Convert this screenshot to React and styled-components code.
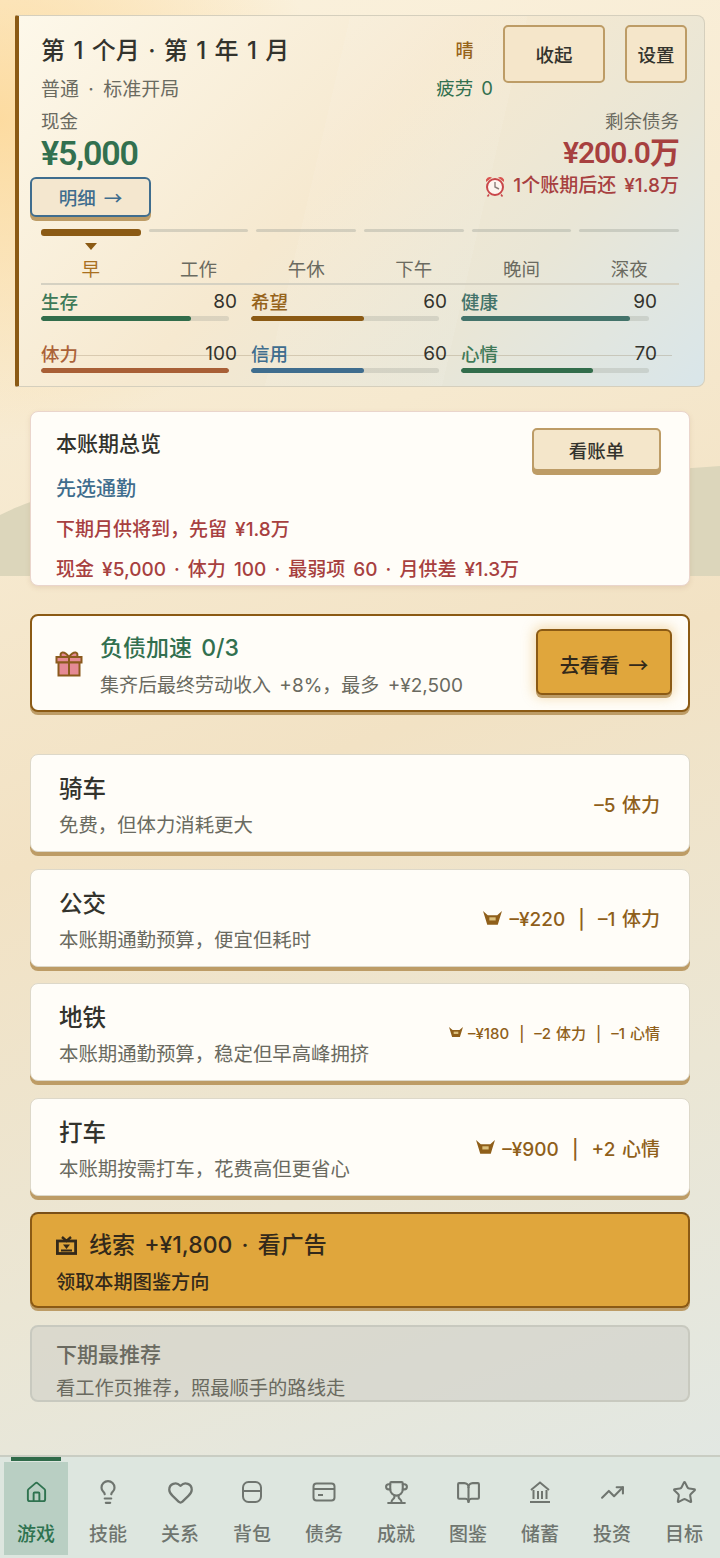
import React from 'react';
import styled, { createGlobalStyle } from 'styled-components';
import { House, Lightbulb, Heart, Trophy, BookOpen, TrendingUp, Star } from 'lucide-react';

const fontStack = '"Inter", "Noto Sans CJK SC", sans-serif';

const GlobalStyle = createGlobalStyle`
  * { box-sizing: border-box; }
  html, body { margin: 0; padding: 0; }
  body {
    font-family: ${fontStack};
    word-spacing: 3px;
    color: #2f2f2a;
  }
  button { font-family: ${fontStack}; word-spacing: 3px; }
`;

const Page = styled.div`
  position: relative;
  width: 720px;
  height: 1558px;
  overflow: hidden;
  display: flex;
  flex-direction: column;
  background:
    radial-gradient(circle at 0 120px, rgba(253, 214, 146, 0.8) 0, rgba(253, 214, 146, 0) 320px),
    linear-gradient(160deg, #fbf2de 0%, #f6e9cf 30%, #f2e2c4 48%, #ebe6d4 72%, #e0e8e6 100%);
`;

const Hill = styled.svg`
  position: absolute;
  left: 0;
  top: 460px;
  width: 720px;
  height: 116px;
`;

const Main = styled.main`
  position: relative;
  flex: 1;
  padding: 15px 30px 0;
  display: flex;
  flex-direction: column;
`;

const Panel = styled.section`
  margin: 0 -15px;
  height: 372px;
  padding: 9px 25px 0 22px;
  border: 1px solid #d5cfbd;
  border-left: 4px solid #8b5a14;
  border-radius: 2px 8px 8px 2px;
  background:
    linear-gradient(103deg, transparent 43%, rgba(255, 255, 255, 0.07) 43%, rgba(255, 255, 255, 0.07) 66%, transparent 66%),
    linear-gradient(135deg, #fdf8ea 0%, #f6e9d0 45%, #e9e6d6 72%, #d9e6ea 100%);
`;

const TopRow = styled.div`
  display: flex;
  align-items: flex-start;
  height: 81px;
`;

const TitleBlock = styled.div`
  flex: 1;
`;

const Title = styled.h1`
  margin: 0;
  font-size: 24px;
  line-height: 52px;
  font-weight: 500;
  word-spacing: 2px;
  color: #33332d;
  white-space: pre;
`;

const Sub = styled.div`
  font-size: 19px;
  line-height: 26px;
  word-spacing: 4px;
  color: #6a6a60;
`;

const StatusCol = styled.div`
  display: flex;
  flex-direction: column;
  align-items: center;
  margin-right: 10px;
`;

const Weather = styled.div`
  font-size: 18px;
  line-height: 52px;
  font-weight: 500;
  color: #96631a;
`;

const Fatigue = styled.div`
  font-size: 18.5px;
  line-height: 22px;
  color: #32704f;
`;

const TopButton = styled.button`
  width: ${p => p.$w}px;
  height: 58px;
  margin-left: ${p => p.$ml || 0}px;
  margin-right: ${p => p.$mr || 0}px;
  border: 2px solid #bd9c66;
  border-radius: 5px;
  background: #f5e6ca;
  font-size: 18.5px;
  font-weight: 500;
  color: #33332d;
`;

const MoneyRow = styled.div`
  display: flex;
  justify-content: space-between;
  align-items: flex-start;
`;

const MoneyLabel = styled.div`
  padding-top: 2px;
  font-size: 18.5px;
  line-height: 26px;
  color: #6a6a60;
`;

const Amount = styled.div`
  font-family: "Roboto", "Noto Sans CJK SC", sans-serif;
  font-size: ${p => p.$size}px;
  line-height: 38px;
  font-weight: 600;
  letter-spacing: ${p => p.$ls}px;
  color: ${p => p.$color};
`;

const DebtCol = styled.div`
  text-align: right;
`;

const DueRow = styled.div`
  display: flex;
  justify-content: flex-end;
  align-items: center;
  gap: 7px;
  font-size: 19px;
  line-height: 28px;
  font-weight: 500;
  color: #a7403f;
`;

const Arrow = styled.span`
  font-family: "Noto Sans CJK SC", sans-serif;
`;

const DetailButton = styled.button`
  display: block;
  width: 121px;
  height: 40px;
  margin: 5px 0 0 -11px;
  border: 2px solid #3f6d8e;
  border-radius: 6px;
  background: #f4e7cf;
  box-shadow: 0 4px 0 #bd9c66;
  font-size: 18.5px;
  font-weight: 500;
  color: #3f6d8e;
`;

const Phases = styled.div`
  display: grid;
  grid-template-columns: repeat(6, 1fr);
  column-gap: 8px;
  margin-top: 12px;
  border-bottom: 2px solid #d5d1c2;
`;

const Phase = styled.div`
  display: flex;
  flex-direction: column;
  align-items: center;
`;

const PhaseBar = styled.div`
  align-self: stretch;
  height: ${p => (p.$active ? 7 : 3)}px;
  margin-bottom: ${p => (p.$active ? 7 : 11)}px;
  border-radius: 3px;
  background: ${p => (p.$active ? '#8b5a14' : 'rgba(150, 155, 145, 0.35)')};
`;

const Marker = styled.div`
  width: 0;
  height: 0;
  border-left: 6px solid transparent;
  border-right: 6px solid transparent;
  border-top: 7px solid ${p => (p.$show ? '#8b5a14' : 'transparent')};
`;

const PhaseLabel = styled.div`
  margin-top: 6px;
  font-size: 18.5px;
  line-height: 26px;
  height: 27px;
  color: ${p => (p.$active ? '#a9701f' : '#6a6a60')};
`;

const Stats = styled.div`
  position: relative;
  display: grid;
  grid-template-columns: repeat(3, 196px);
  column-gap: 14px;
  margin-top: 3px;
`;

const Strike = styled.div`
  position: absolute;
  left: 0;
  width: 631px;
  top: 67px;
  height: 1px;
  background: rgba(140, 120, 85, 0.28);
`;

const Stat = styled.div`
  position: relative;
  height: 52px;
`;

const StatHead = styled.div`
  display: flex;
  justify-content: space-between;
  padding-top: 2px;
  font-size: 18.5px;
  line-height: 24px;
`;

const StatName = styled.span`
  color: ${p => p.$color};
  font-weight: 500;
`;

const StatValue = styled.span`
  font-size: 19px;
  color: #33332d;
`;

const Track = styled.div`
  width: 188px;
  height: 5px;
  margin-top: 2px;
  border-radius: 3px;
  overflow: hidden;
  background: rgba(150, 155, 145, 0.28);
`;

const Fill = styled.div`
  height: 100%;
  border-radius: 3px;
  background: ${p => p.$color};
`;

const Overview = styled.section`
  position: relative;
  height: 175px;
  margin-top: 24px;
  padding: 16px 28px 0 25px;
  overflow: hidden;
  background: #fffdf8;
  border: 1px solid #ead5cc;
  border-radius: 8px;
  box-shadow: 0 2px 5px rgba(160, 120, 90, 0.16);
`;

const OverviewTop = styled.div`
  display: flex;
  justify-content: space-between;
  align-items: flex-start;
  height: 46px;
`;

const OverviewTitle = styled.div`
  margin-top: 1px;
  font-size: 21px;
  line-height: 30px;
  font-weight: 500;
  color: #33332d;
`;

const BillButton = styled.button`
  width: 129px;
  height: 43px;
  border: 2px solid #bd9c66;
  border-radius: 5px;
  background: #f4e6ca;
  box-shadow: 0 4px 0 #bd9c66;
  font-size: 18.5px;
  font-weight: 500;
  color: #33332d;
`;

const OverviewLine = styled.div`
  margin-bottom: 10.5px;
  font-size: ${p => p.$size || 19}px;
  line-height: 30px;
  font-weight: 500;
  color: ${p => p.$color};
`;

const Boost = styled.section`
  display: flex;
  align-items: center;
  height: 98px;
  margin-top: 28px;
  padding: 0 16px 0 23px;
  background: #fffdf8;
  border: 2px solid #8b5a14;
  border-radius: 8px;
  box-shadow: 0 3px 0 #bd9c66;
`;

const BoostText = styled.div`
  flex: 1;
  margin: 8px 0 0 17px;
`;

const BoostTitle = styled.div`
  font-size: 23px;
  line-height: 30px;
  font-weight: 500;
  color: #32704f;
`;

const BoostSub = styled.div`
  margin-top: 8px;
  font-size: 19px;
  line-height: 30px;
  color: #6a6a60;
`;

const GoButton = styled.button`
  width: 136px;
  height: 66px;
  margin-top: -2px;
  padding-top: 6px;
  border: 2px solid #8b5a14;
  border-radius: 6px;
  background: #e0a63c;
  box-shadow: 0 3px 0 #bd9c66, 0 0 12px 3px rgba(224, 166, 60, 0.35);
  font-size: 20px;
  font-weight: 500;
  color: #33291a;
`;

const Options = styled.div`
  display: flex;
  flex-direction: column;
  gap: 16.7px;
  margin-top: 42px;
`;

const Option = styled.div`
  display: flex;
  justify-content: space-between;
  align-items: center;
  height: 98px;
  padding: 0 29px 0 28px;
  background: #fffdf8;
  border: 1px solid #ddd8c9;
  border-radius: 8px;
  box-shadow: 0 4px 0 #bd9c66;
`;

const OptionText = styled.div`
  margin-top: 8px;
`;

const OptionName = styled.div`
  font-size: 23.5px;
  line-height: 32px;
  font-weight: 500;
  color: #33332d;
`;

const OptionDesc = styled.div`
  margin-top: 4px;
  font-size: 19.4px;
  line-height: 32px;
  color: #6a6a60;
`;

const Cost = styled.div`
  display: flex;
  align-items: center;
  gap: ${p => (p.$small ? 5 : 7)}px;
  font-size: ${p => (p.$small ? 15 : 19)}px;
  font-weight: 500;
  word-spacing: ${p => (p.$small ? 1 : 1.5)}px;
  color: #8f5f1a;
  white-space: pre;
`;

const AdCard = styled.section`
  height: 96px;
  margin-top: 16px;
  padding: 15px 24px 0;
  background: #e0a63c;
  border: 2px solid #8b5a14;
  border-top-color: #7a5018;
  border-radius: 8px;
  box-shadow: 0 3px 0 #bd9c66;
`;

const AdTitle = styled.div`
  display: flex;
  align-items: center;
  gap: 12px;
  font-size: 23px;
  line-height: 32px;
  font-weight: 500;
  color: #33291a;
`;

const AdSub = styled.div`
  margin-top: 6px;
  font-size: 19.2px;
  line-height: 30px;
  font-weight: 500;
  color: #33291a;
`;

const NextCard = styled.section`
  height: 77px;
  margin-top: 17px;
  padding: 12px 24px 0;
  overflow: hidden;
  background: rgba(205, 205, 198, 0.55);
  border: 2px solid #c8c9bf;
  border-radius: 8px;
`;

const NextTitle = styled.div`
  font-size: 21px;
  line-height: 32px;
  font-weight: 500;
  color: #6a6a60;
`;

const NextSub = styled.div`
  margin-top: 2px;
  font-size: 19.3px;
  line-height: 30px;
  color: #6a6a60;
`;

const Nav = styled.nav`
  position: relative;
  display: grid;
  grid-template-columns: repeat(10, 72px);
  height: 103px;
  border-top: 2px solid #c9cdc3;
  background: #dde6df;
`;

const NavItem = styled.div`
  position: relative;
  display: flex;
  flex-direction: column;
  align-items: center;
  margin: 5px 4px 3px;
  padding-top: 17px;
  background: ${p => (p.$active ? '#b9cfc3' : 'transparent')};
  color: ${p => (p.$active ? '#2f7350' : '#6f756f')};
`;

const Indicator = styled.div`
  position: absolute;
  top: -5px;
  left: 7px;
  right: 7px;
  height: 4px;
  background: #2f6b4a;
`;

const NavIcon = styled.div`
  display: flex;
  align-items: center;
  justify-content: center;
  height: 26px;
`;

const NavLabel = styled.div`
  margin-top: 17px;
  font-size: 19px;
  line-height: 26px;
  font-weight: 500;
`;

const CrownIcon = ({ size }) => (
  <svg width={size} height={size * 0.72} viewBox="0 0 18 13">
    <path d="M0 0 L4.5 4 H13.5 L18 0 L15.5 8 L14 13 H4 L2.5 8 Z" fill="#8f5f1a" />
    <rect x="6" y="6" width="6" height="3" fill="#dcc07c" />
  </svg>
);

const TvIcon = () => (
  <svg width="21" height="19" viewBox="0 0 21 19">
    <path d="M6 1 L10.5 5 L15 1" fill="none" stroke="#33291a" strokeWidth="2.4" />
    <rect x="1.4" y="5" width="18.2" height="12.5" fill="none" stroke="#33291a" strokeWidth="2.8" />
    <path d="M7 8.5 H14 L10.5 13 Z" fill="#33291a" />
    <rect x="5" y="13.5" width="11" height="2" fill="#33291a" />
  </svg>
);

const AlarmIcon = () => (
  <svg width="22" height="22" viewBox="0 0 22 22">
    <path d="M2 7 A4 4 0 0 1 8 2.6 Z M20 7 A4 4 0 0 0 14 2.6 Z" fill="#d9534f" />
    <circle cx="11" cy="12" r="8" fill="#fdf5ee" stroke="#c9474a" strokeWidth="2" />
    <path d="M11 7 V12 L15 14" fill="none" stroke="#8a7f7a" strokeWidth="1.4" />
    <path d="M5 19.5 L3.5 21.5 M17 19.5 L18.5 21.5" stroke="#c9474a" strokeWidth="1.6" />
  </svg>
);

const GiftIcon = () => (
  <svg width="28" height="28" viewBox="0 0 28 28">
    <path d="M14 8 C9 1 4 3 6 8 Z M14 8 C19 1 24 3 22 8 Z" fill="#e58a94" stroke="#8b5a1d" strokeWidth="2" />
    <rect x="1.5" y="8" width="25" height="5.5" fill="#e58a94" stroke="#8b5a1d" strokeWidth="2" />
    <rect x="3.5" y="13.5" width="21" height="13" fill="#e58a94" stroke="#8b5a1d" strokeWidth="2" />
    <path d="M14 8 V26.5" stroke="#8b5a1d" strokeWidth="2" />
  </svg>
);

const BagIcon = () => (
  <svg width="24" height="24" viewBox="0 0 24 24" fill="none" stroke="currentColor" strokeWidth="2">
    <rect x="3" y="2" width="18" height="20" rx="5.5" />
    <path d="M3 11 H21" />
  </svg>
);

const CardIcon = () => (
  <svg width="24" height="24" viewBox="0 0 24 24" fill="none" stroke="currentColor" strokeWidth="2">
    <rect x="1.5" y="3.5" width="21" height="17" rx="3" />
    <path d="M1.5 9 H22.5 M6 15 H11" />
  </svg>
);

const BankIcon = () => (
  <svg width="24" height="24" viewBox="0 0 24 24" fill="none" stroke="currentColor" strokeWidth="2">
    <path d="M3 10 L12 2.5 L21 10" />
    <path d="M5.5 10 V19 M18.5 10 V19 M10 11 V19 M14 11 V19" />
    <path d="M2 22 H22" />
  </svg>
);

const phases = ['早', '工作', '午休', '下午', '晚间', '深夜'];

const stats = [
  { name: '生存', value: 80, color: '#326d4b', label: '#3f7a58' },
  { name: '希望', value: 60, color: '#8b5a14', label: '#96631a' },
  { name: '健康', value: 90, color: '#43736a', label: '#43736a' },
  { name: '体力', value: 100, color: '#a85f36', label: '#ab6238' },
  { name: '信用', value: 60, color: '#3f6d8e', label: '#3f6d8e' },
  { name: '心情', value: 70, color: '#326d4b', label: '#3f7a58' },
];

const commutes = [
  { name: '骑车', desc: '免费，但体力消耗更大', cost: '–5 体力' },
  { name: '公交', desc: '本账期通勤预算，便宜但耗时', cost: '–¥220  |  –1 体力', icon: 19 },
  { name: '地铁', desc: '本账期通勤预算，稳定但早高峰拥挤', cost: '–¥180  |  –2 体力  |  –1 心情', icon: 14, small: true },
  { name: '打车', desc: '本账期按需打车，花费高但更省心', cost: '–¥900  |  +2 心情', icon: 19 },
];

const tabs = [
  { label: '游戏', icon: <House size={23} strokeWidth={2} />, active: true },
  { label: '技能', icon: <Lightbulb size={26} strokeWidth={2} /> },
  { label: '关系', icon: <Heart size={27} strokeWidth={2} /> },
  { label: '背包', icon: <BagIcon /> },
  { label: '债务', icon: <CardIcon /> },
  { label: '成就', icon: <Trophy size={25} strokeWidth={2} /> },
  { label: '图鉴', icon: <BookOpen size={25} strokeWidth={2} /> },
  { label: '储蓄', icon: <BankIcon /> },
  { label: '投资', icon: <TrendingUp size={25} strokeWidth={2} /> },
  { label: '目标', icon: <Star size={25} strokeWidth={2} /> },
];

export default function App() {
  return (
    <Page>
      <GlobalStyle />
      <Hill viewBox="0 0 720 116">
        <path d="M0 55 C60 25 140 10 360 14 C520 16 640 12 720 6 V116 H0 Z" fill="#dcd6bb" />
      </Hill>
      <Main>
        <Panel>
          <TopRow>
            <TitleBlock>
              <Title>第 1 个月 · 第 1 年 1 月</Title>
              <Sub>普通 · 标准开局</Sub>
            </TitleBlock>
            <StatusCol>
              <Weather>晴</Weather>
              <Fatigue>疲劳 0</Fatigue>
            </StatusCol>
            <TopButton $w={102}>收起</TopButton>
            <TopButton $w={62} $ml={20} $mr={-8}>设置</TopButton>
          </TopRow>
          <MoneyRow>
            <div>
              <MoneyLabel>现金</MoneyLabel>
              <Amount $color="#32704f" $size={34} $ls={-1.2}>¥5,000</Amount>
              <DetailButton>明细 <Arrow>→</Arrow></DetailButton>
            </div>
            <DebtCol>
              <MoneyLabel>剩余债务</MoneyLabel>
              <Amount $color="#a7403f" $size={30} $ls={-1}>¥200.0万</Amount>
              <DueRow><AlarmIcon />1个账期后还 ¥1.8万</DueRow>
            </DebtCol>
          </MoneyRow>
          <Phases>
            {phases.map((p, i) => (
              <Phase key={p}>
                <PhaseBar $active={i === 0} />
                <Marker $show={i === 0} />
                <PhaseLabel $active={i === 0}>{p}</PhaseLabel>
              </Phase>
            ))}
          </Phases>
          <Stats>
            <Strike />
            {stats.map(s => (
              <Stat key={s.name}>
                <StatHead>
                  <StatName $color={s.label}>{s.name}</StatName>
                  <StatValue>{s.value}</StatValue>
                </StatHead>
                <Track>
                  <Fill $color={s.color} style={{ width: `${s.value}%` }} />
                </Track>
              </Stat>
            ))}
          </Stats>
        </Panel>

        <Overview>
          <OverviewTop>
            <OverviewTitle>本账期总览</OverviewTitle>
            <BillButton>看账单</BillButton>
          </OverviewTop>
          <OverviewLine $color="#3f6d8e" $size={20}>先选通勤</OverviewLine>
          <OverviewLine $color="#a7403f">下期月供将到，先留 ¥1.8万</OverviewLine>
          <OverviewLine $color="#a7403f">现金 ¥5,000 · 体力 100 · 最弱项 60 · 月供差 ¥1.3万</OverviewLine>
        </Overview>

        <Boost>
          <GiftIcon />
          <BoostText>
            <BoostTitle>负债加速 0/3</BoostTitle>
            <BoostSub>集齐后最终劳动收入 +8%，最多 +¥2,500</BoostSub>
          </BoostText>
          <GoButton>去看看 <Arrow>→</Arrow></GoButton>
        </Boost>

        <Options>
          {commutes.map(c => (
            <Option key={c.name}>
              <OptionText>
                <OptionName>{c.name}</OptionName>
                <OptionDesc>{c.desc}</OptionDesc>
              </OptionText>
              <Cost $small={c.small}>
                {c.icon && <CrownIcon size={c.icon} />}
                {c.cost}
              </Cost>
            </Option>
          ))}
        </Options>

        <AdCard>
          <AdTitle><TvIcon />线索 +¥1,800 · 看广告</AdTitle>
          <AdSub>领取本期图鉴方向</AdSub>
        </AdCard>

        <NextCard>
          <NextTitle>下期最推荐</NextTitle>
          <NextSub>看工作页推荐，照最顺手的路线走</NextSub>
        </NextCard>
      </Main>
      <Nav>
        {tabs.map(t => (
          <NavItem key={t.label} $active={t.active}>
            {t.active && <Indicator />}
            <NavIcon>{t.icon}</NavIcon>
            <NavLabel>{t.label}</NavLabel>
          </NavItem>
        ))}
      </Nav>
    </Page>
  );
}
